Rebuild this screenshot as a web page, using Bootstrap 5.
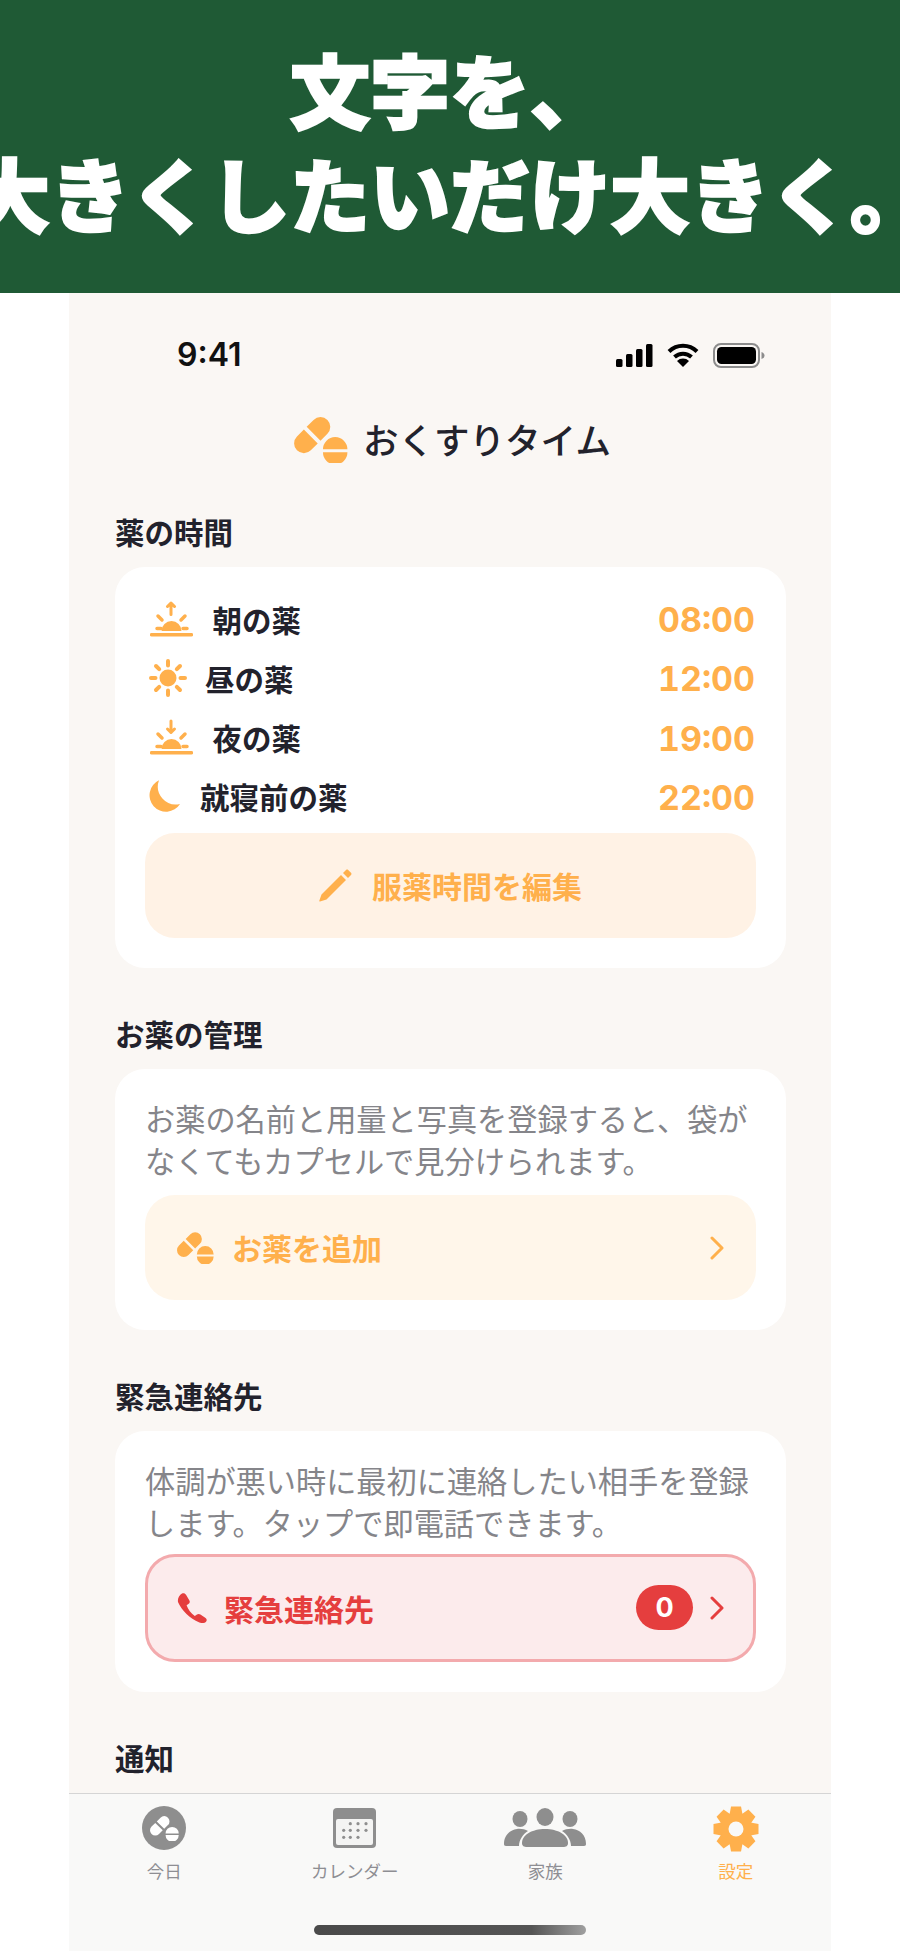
<!DOCTYPE html>
<html lang="ja">
<head>
    <meta charset="UTF-8">
    <meta name="viewport" content="width=device-width, initial-scale=1.0">
    <title>おくすりタイム</title>
    <link href="https://cdn.jsdelivr.net/npm/bootstrap@5.3.0/dist/css/bootstrap.min.css" rel="stylesheet">
    <style>
        body { margin: 0; overflow: hidden; background: #fff; font-family: "Noto Sans CJK JP", "Noto Sans", sans-serif; color: #22222c; }
        .promo { height: 293px; padding-bottom: 16px; background: #1f5a35; color: #fff; font-size: 80px; font-weight: 900; line-height: 104px; white-space: nowrap; overflow: hidden; -webkit-text-stroke: 2.5px #fff; }
        .phone { width: 762px; height: 1658px; background: #faf7f4; overflow: hidden; }
        .status { height: 84px; padding: 40px 66px 0 108px; }
        .statusicons { gap: 14px; }
        .clock { font-family: Inter, sans-serif; font-size: 32px; font-weight: 600; color: #111; line-height: 44px; }
        .apptitle { height: 60px; margin-top: 32px; margin-bottom: 44px; gap: 15px; font-size: 35.5px; font-weight: 500; }
        .titlepill { margin-left: 5px; margin-top: 2px; }
        .scroller { padding: 0 45px 0 46px; }
        .sechead { height: 40px; line-height: 36px; padding-bottom: 4px; margin: 0 0 14px; font-size: 29.5px; font-weight: 700; }
        .panel { background: #fff; border: 0; border-radius: 30px; padding: 28px 30px 30px; margin-bottom: 47px; }
        .panel.times { padding-top: 22px; padding-bottom: 30px; }
        .timerow { height: 59.3px; padding-left: 2px; gap: 20px; font-size: 29.5px; font-weight: 700; }
        .timeval { font-family: Inter, sans-serif; font-size: 34px; font-weight: 700; color: #ffb04c; font-variant-numeric: tabular-nums; padding-top: 2px; margin-right: 1px; }
        .amber { color: #ffb04c; }
        .riseicon { margin-left: 2.5px; }
        .sunicon { margin-left: 2px; margin-right: -2px; }
        .note { font-size: 30.2px; line-height: 42px; color: #85858a; margin: 0 -8px 14px 0; }
        .bigbtn { height: 105px; width: 100%; border-radius: 30px; border: 0; font-size: 30px; font-weight: 700; padding: 0 32px; }
        .bigbtn.edit { background: #fff2e5; color: #ffb04c; gap: 20px; margin-top: 7px; }
        .bigbtn.edit:hover, .bigbtn.add:hover { color: #ffb04c; }
        .bigbtn.add { background: #fff6ea; color: #ffb04c; gap: 18px; }
        .bigbtn.sos { height: 108px; background: #fcebec; color: #e53e3e; border: 3px solid #f3aaad; padding: 0 29px; gap: 17px; margin-top: -3px; }
        .bigbtn.sos:hover { background: #fcebec; color: #e53e3e; border-color: #f3aaad; }
        .zero { width: 57px; height: 45px; background: #e53e3e; color: #fff; font-family: Inter, sans-serif; font-size: 27px; font-weight: 700; line-height: 45px; padding: 0; }
        .tabbar { height: 158px; flex: none; background: #f9f9f8; border-top: 1px solid #d5d5d5; padding-top: 12px; }
        .tabitem { width: 191px; height: 72px; font-size: 17.5px; line-height: 22px; color: #8e8e93; }
        .tabitem.on { color: #ffb04c; }
        .tabicon { height: 46px; margin-bottom: 8px; }
        .tabglyph { margin-top: 2px; }
        .homebar { width: 272px; height: 10px; border-radius: 5px; margin: 47px auto 0; background: linear-gradient(90deg, #4a4a4a 0%, #555 80%, #a0a0a0 100%); }
    </style>
</head>
<body>
    <svg width="0" height="0" class="d-block">
        <symbol id="pills" viewBox="0 0 55 47">
            <g transform="rotate(-45 18.500 18.500)" fill="currentColor">
                <path d="M16.500 8.500H6.500a10 10 0 0 0 0 20h10z"/>
                <path d="M20.500 8.500h10a10 10 0 0 1 0 20h-10z"/>
            </g>
            <path fill="currentColor" d="M29.500 33a12.500 12.500 0 0 1 25 0zM29.500 36a12.500 12.500 0 0 0 25 0z"/>
        </symbol>
        <symbol id="rays" viewBox="0 0 43 36">
            <path fill="currentColor" d="M11.500 30a10 10 0 0 1 20 0z"/>
            <g stroke="currentColor" stroke-width="3.500" stroke-linecap="round" fill="none">
                <path d="M1.500 33.800h40"/>
                <path d="M7 27.500h4M33 27.500h4"/>
                <path d="M8 15l4 4M35 15l-4 4"/>
            </g>
        </symbol>
    </svg>

    <div class="promo d-flex flex-column align-items-center justify-content-center">
        <div>文字を、</div>
        <div>大きくしたいだけ大きく。</div>
    </div>

    <div class="phone mx-auto d-flex flex-column">
        <div class="flex-grow-1 overflow-hidden">
            <div class="status d-flex justify-content-between align-items-center">
                <span class="clock">9:41</span>
                <span class="d-flex align-items-center statusicons">
                    <svg width="37" height="23" viewBox="0 0 37 23" fill="#000"><rect x="0" y="15" width="6.500" height="8" rx="1.500"/><rect x="10" y="10" width="6.500" height="13" rx="1.500"/><rect x="20" y="5" width="6.500" height="18" rx="1.500"/><rect x="30" y="0" width="6.500" height="23" rx="1.500"/></svg>
                    <svg width="32" height="24" viewBox="0 0 32 24" fill="none" stroke="#000" stroke-width="4"><path d="M2 8.500a20 20 0 0 1 28 0"/><path d="M7.500 14a12.500 12.500 0 0 1 17 0"/><path fill="#000" stroke="none" d="M16 24l-6-6a8.500 8.500 0 0 1 12 0z"/></svg>
                    <svg width="52" height="25" viewBox="0 0 52 25"><rect x="1" y="1" width="45" height="23" rx="7" fill="none" stroke="#8c8c8c" stroke-width="2"/><rect x="4" y="4" width="39" height="17" rx="4.500" fill="#000"/><path d="M48.500 9c2 .5 3 2 3 3.500s-1 3-3 3.500z" fill="#8c8c8c"/></svg>
                </span>
            </div>

            <div class="apptitle d-flex align-items-center justify-content-center">
                <svg width="54" height="46" class="amber titlepill"><use href="#pills" width="54" height="46"/></svg>
                <span>おくすりタイム</span>
            </div>

            <div class="scroller">
                <h2 class="sechead">薬の時間</h2>
                <div class="card panel times">
                    <div class="timerow d-flex align-items-center">
                        <svg width="43" height="36" class="amber riseicon" viewBox="0 0 43 36"><use href="#rays" width="43" height="36"/><path d="M21 13.500V2M17.500 5.500L21 2l3.500 3.500" fill="none" stroke="currentColor" stroke-width="3" stroke-linecap="round" stroke-linejoin="round"/></svg>
                        <span>朝の薬</span>
                        <span class="timeval ms-auto">08:00</span>
                    </div>
                    <div class="timerow d-flex align-items-center">
                        <svg width="38" height="38" class="amber sunicon" viewBox="0 0 38 38"><circle cx="19" cy="19" r="8.500" fill="currentColor"/><path d="M19 2v4.500M19 31.500V36M2 19h4.500M31.500 19H36M7 7l3.200 3.200M27.800 27.800L31 31M7 31l3.200-3.200M27.800 10.200L31 7" stroke="currentColor" stroke-width="4" stroke-linecap="round"/></svg>
                        <span>昼の薬</span>
                        <span class="timeval ms-auto">12:00</span>
                    </div>
                    <div class="timerow d-flex align-items-center">
                        <svg width="43" height="36" class="amber riseicon" viewBox="0 0 43 36"><use href="#rays" width="43" height="36"/><path d="M21 2v11.500M17.500 10L21 13.500 24.500 10" fill="none" stroke="currentColor" stroke-width="3" stroke-linecap="round" stroke-linejoin="round"/></svg>
                        <span>夜の薬</span>
                        <span class="timeval ms-auto">19:00</span>
                    </div>
                    <div class="timerow d-flex align-items-center">
                        <svg width="33" height="33" class="amber" viewBox="0 0 33 33"><path fill="currentColor" d="M12 .3A16.500 16.500 0 1 0 33 24 18 18 0 0 1 12 .3z"/></svg>
                        <span>就寝前の薬</span>
                        <span class="timeval ms-auto">22:00</span>
                    </div>
                    <button class="btn bigbtn edit d-flex align-items-center justify-content-center">
                        <svg width="33" height="33" viewBox="0 0 33 33" fill="currentColor"><path d="M1 32.500c-.6.200-.9-.200-.7-.8L2.500 25.500 22 6l5 5L7.500 30.500z"/><path d="M24 4l3-3c.7-.6 1.500-.6 2.200 0l2.800 2.800c.6.700.6 1.500 0 2.200l-3 3z"/></svg>
                        <span>服薬時間を編集</span>
                    </button>
                </div>

                <h2 class="sechead">お薬の管理</h2>
                <div class="card panel">
                    <p class="note">お薬の名前と用量と写真を登録すると、袋がなくてもカプセルで見分けられます。</p>
                    <button class="btn bigbtn add d-flex align-items-center">
                        <svg width="37" height="32"><use href="#pills" width="37" height="32"/></svg>
                        <span>お薬を追加</span>
                        <svg width="14" height="24" viewBox="0 0 14 24" class="ms-auto" fill="none" stroke="currentColor" stroke-width="3" stroke-linecap="round" stroke-linejoin="round"><path d="M2 2l10 10L2 22"/></svg>
                    </button>
                </div>

                <h2 class="sechead">緊急連絡先</h2>
                <div class="card panel">
                    <p class="note">体調が悪い時に最初に連絡したい相手を登録します。タップで即電話できます。</p>
                    <button class="btn bigbtn sos d-flex align-items-center">
                        <svg width="30" height="30" viewBox="0 0 30 30" fill="currentColor"><path d="M5 .6C6.600-.2 8.200.4 9 1.800L12.400 7.400C13.100 8.600 12.800 10 11.700 10.800L9.600 12.300C11 16.500 14 20.500 17.800 23L20 21.400C21 20.700 22.400 20.700 23.400 21.400L28.600 25C30 26 30.100 28 28.800 29 27 30.300 24.600 30.400 22.400 29.500 12.500 25.500 5 17.500 1.200 9.500.1 6.500 2 2.400 5 .6Z"/></svg>
                        <span>緊急連絡先</span>
                        <span class="badge rounded-pill zero ms-auto">0</span>
                        <svg width="14" height="24" viewBox="0 0 14 24" fill="none" stroke="currentColor" stroke-width="3" stroke-linecap="round" stroke-linejoin="round"><path d="M2 2l10 10L2 22"/></svg>
                    </button>
                </div>

                <h2 class="sechead">通知</h2>
            </div>
        </div>

        <div class="tabbar">
            <div class="d-flex">
                <div class="tabitem text-center">
                    <div class="tabicon">
                        <svg width="44" height="44" viewBox="0 0 44 44"><circle cx="22" cy="22" r="22" fill="#8e8e8e"/><svg x="8" y="10" width="29" height="25" class="text-white"><use href="#pills" width="29" height="25"/></svg></svg>
                    </div>
                    <div>今日</div>
                </div>
                <div class="tabitem text-center">
                    <div class="tabicon">
                        <svg width="43" height="40" viewBox="0 0 43 40" class="tabglyph"><rect width="43" height="40" rx="4" fill="#8e8e8e"/><rect x="3" y="11" width="37" height="26" rx="2" fill="#f4f4f3"/><g fill="#8e8e8e"><circle cx="17.300" cy="15.700" r="1.600"/><circle cx="25" cy="15.700" r="1.600"/><circle cx="33" cy="15.700" r="1.600"/><circle cx="10.700" cy="22.300" r="1.600"/><circle cx="17.300" cy="22.300" r="1.600"/><circle cx="25" cy="22.300" r="1.600"/><circle cx="33" cy="22.300" r="1.600"/><circle cx="10.700" cy="29.300" r="1.600"/><circle cx="17.300" cy="29.300" r="1.600"/><circle cx="25" cy="29.300" r="1.600"/></g></svg>
                    </div>
                    <div>カレンダー</div>
                </div>
                <div class="tabitem text-center">
                    <div class="tabicon">
                        <svg width="82" height="40" viewBox="0 0 82 40" class="tabglyph" fill="#8e8e8e"><ellipse cx="16" cy="11" rx="7.500" ry="8"/><ellipse cx="41" cy="9" rx="8.500" ry="9"/><ellipse cx="66" cy="11" rx="7.500" ry="8"/><path d="M0 36c0-9 6-14 13-15 4-.5 8 .5 11 2-5 3-9 9-9 15H2c-1.500 0-2-.8-2-2z"/><path d="M82 36c0-9-6-14-13-15-4-.5-8 .5-11 2 5 3 9 9 9 15h13c1.500 0 2-.8 2-2z"/><path d="M23 40c-3 0-5-1-5-4 0-8 10-14 23-14s23 6 23 14c0 3-2 4-5 4z" transform="translate(0 -1)"/></svg>
                    </div>
                    <div>家族</div>
                </div>
                <div class="tabitem on text-center">
                    <div class="tabicon">
                        <svg width="46" height="46" viewBox="0 0 46 46" fill="#ffb04c"><circle cx="23" cy="23" r="16.500"/><g><path d="M18 0.500h10l1.500 8h-13z"/><path d="M18 45.500h10l1.500-8h-13z"/><path d="M.5 18v10l8 1.500v-13z"/><path d="M45.500 18v10l-8 1.500v-13z"/></g><g transform="rotate(45 23 23)"><path d="M18 0.500h10l1.500 8h-13z"/><path d="M18 45.500h10l1.500-8h-13z"/><path d="M.5 18v10l8 1.500v-13z"/><path d="M45.500 18v10l-8 1.500v-13z"/></g><circle cx="23" cy="23" r="7.500" fill="#f9f9f8"/></svg>
                    </div>
                    <div>設定</div>
                </div>
            </div>
            <div class="homebar"></div>
        </div>
    </div>

    <script src="https://cdn.jsdelivr.net/npm/bootstrap@5.3.0/dist/js/bootstrap.bundle.min.js"></script>
</body>
</html>
